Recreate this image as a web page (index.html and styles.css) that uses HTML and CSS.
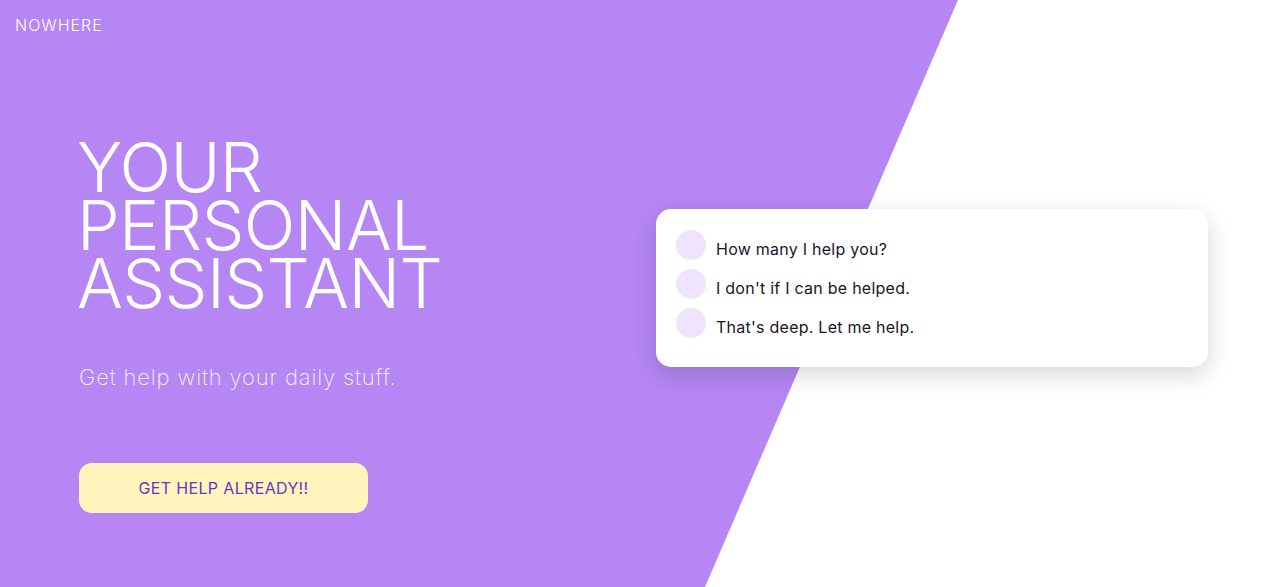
FILE: index.html
```html
<!DOCTYPE html>
<html lang="en">
<head>
<meta charset="utf-8">
<title>Nowhere — Your Personal Assistant</title>
<link rel="stylesheet" href="styles.css">
</head>
<body>
<div class="page">
  <header class="topbar">
    <div class="logo">NOWHERE</div>
  </header>
  <main class="hero">
    <section class="intro">
      <h1 class="title"><span class="title-line">YOUR</span><span class="title-line">PERSONAL</span><span class="title-line">ASSISTANT</span></h1>
      <p class="subtitle">Get help with your daily stuff.</p>
      <button class="cta" type="button">GET HELP ALREADY!!</button>
    </section>
    <section class="chat">
      <div class="chat-card">
        <div class="msg"><span class="avatar"></span><span class="msg-text">How many I help you?</span></div>
        <div class="msg"><span class="avatar"></span><span class="msg-text">I don't if I can be helped.</span></div>
        <div class="msg"><span class="avatar"></span><span class="msg-text">That's deep. Let me help.</span></div>
      </div>
    </section>
  </main>
</div>
</body>
</html>
```
FILE: styles.css
```css
* { box-sizing: border-box; }
html, body { margin: 0; padding: 0; }
body {
  font-family: "Inter", "Open Sans", sans-serif;
  background: #ffffff;
  overflow: hidden;
}
.page {
  position: relative;
  width: 1280px;
  height: 587px;
  display: flex;
  flex-direction: column;
}
.page::before {
  content: "";
  position: absolute;
  inset: 0;
  background: #b686f4;
  clip-path: polygon(0 0, 958px 0, 705px 100%, 0 100%);
  z-index: 0;
}
.topbar {
  position: relative;
  z-index: 1;
  padding: 14px 15px 0;
}
.logo {
  color: #ffffff;
  font-size: 16px;
  font-weight: 300;
  line-height: 22px;
  letter-spacing: 1px;
}
.hero {
  position: relative;
  z-index: 1;
  display: flex;
  padding-left: 79px;
}
.intro {
  width: 577px;
  padding-top: 102px;
}
.title {
  margin: 0 0 0 -2px;
  color: #ffffff;
  font-weight: 300;
  font-size: 68px;
  line-height: 58px;
  letter-spacing: -0.6px;
  display: flex;
  flex-direction: column;
}
.title-line {
  display: block;
  height: 58px;
}
.subtitle {
  margin: 50px 0 0;
  color: rgba(255,255,255,0.9);
  font-size: 22px;
  font-weight: 200;
  line-height: 30px;
  letter-spacing: 0.85px;
}
.cta {
  margin-top: 71px;
  width: 289px;
  height: 50px;
  border: none;
  border-radius: 13px;
  background: #fff5bd;
  color: #6a34c2;
  font-family: inherit;
  font-size: 16px;
  font-weight: 400;
  letter-spacing: 0.35px;
  cursor: pointer;
}
.chat {
  padding-top: 173px;
}
.chat-card {
  width: 552px;
  height: 158px;
  background: #ffffff;
  border-radius: 15px;
  box-shadow: 0 8px 24px rgba(0,0,0,0.16);
  padding: 21px 20px;
  display: flex;
  flex-direction: column;
  gap: 9px;
}
.msg {
  display: flex;
  align-items: flex-start;
  gap: 10px;
}
.avatar {
  width: 30px;
  height: 30px;
  border-radius: 50%;
  background: #efe4fd;
  flex: none;
}
.msg-text {
  color: #1c1426;
  font-size: 16px;
  font-weight: 400;
  line-height: 20px;
  padding-top: 9px;
  letter-spacing: 0.25px;
}
```
